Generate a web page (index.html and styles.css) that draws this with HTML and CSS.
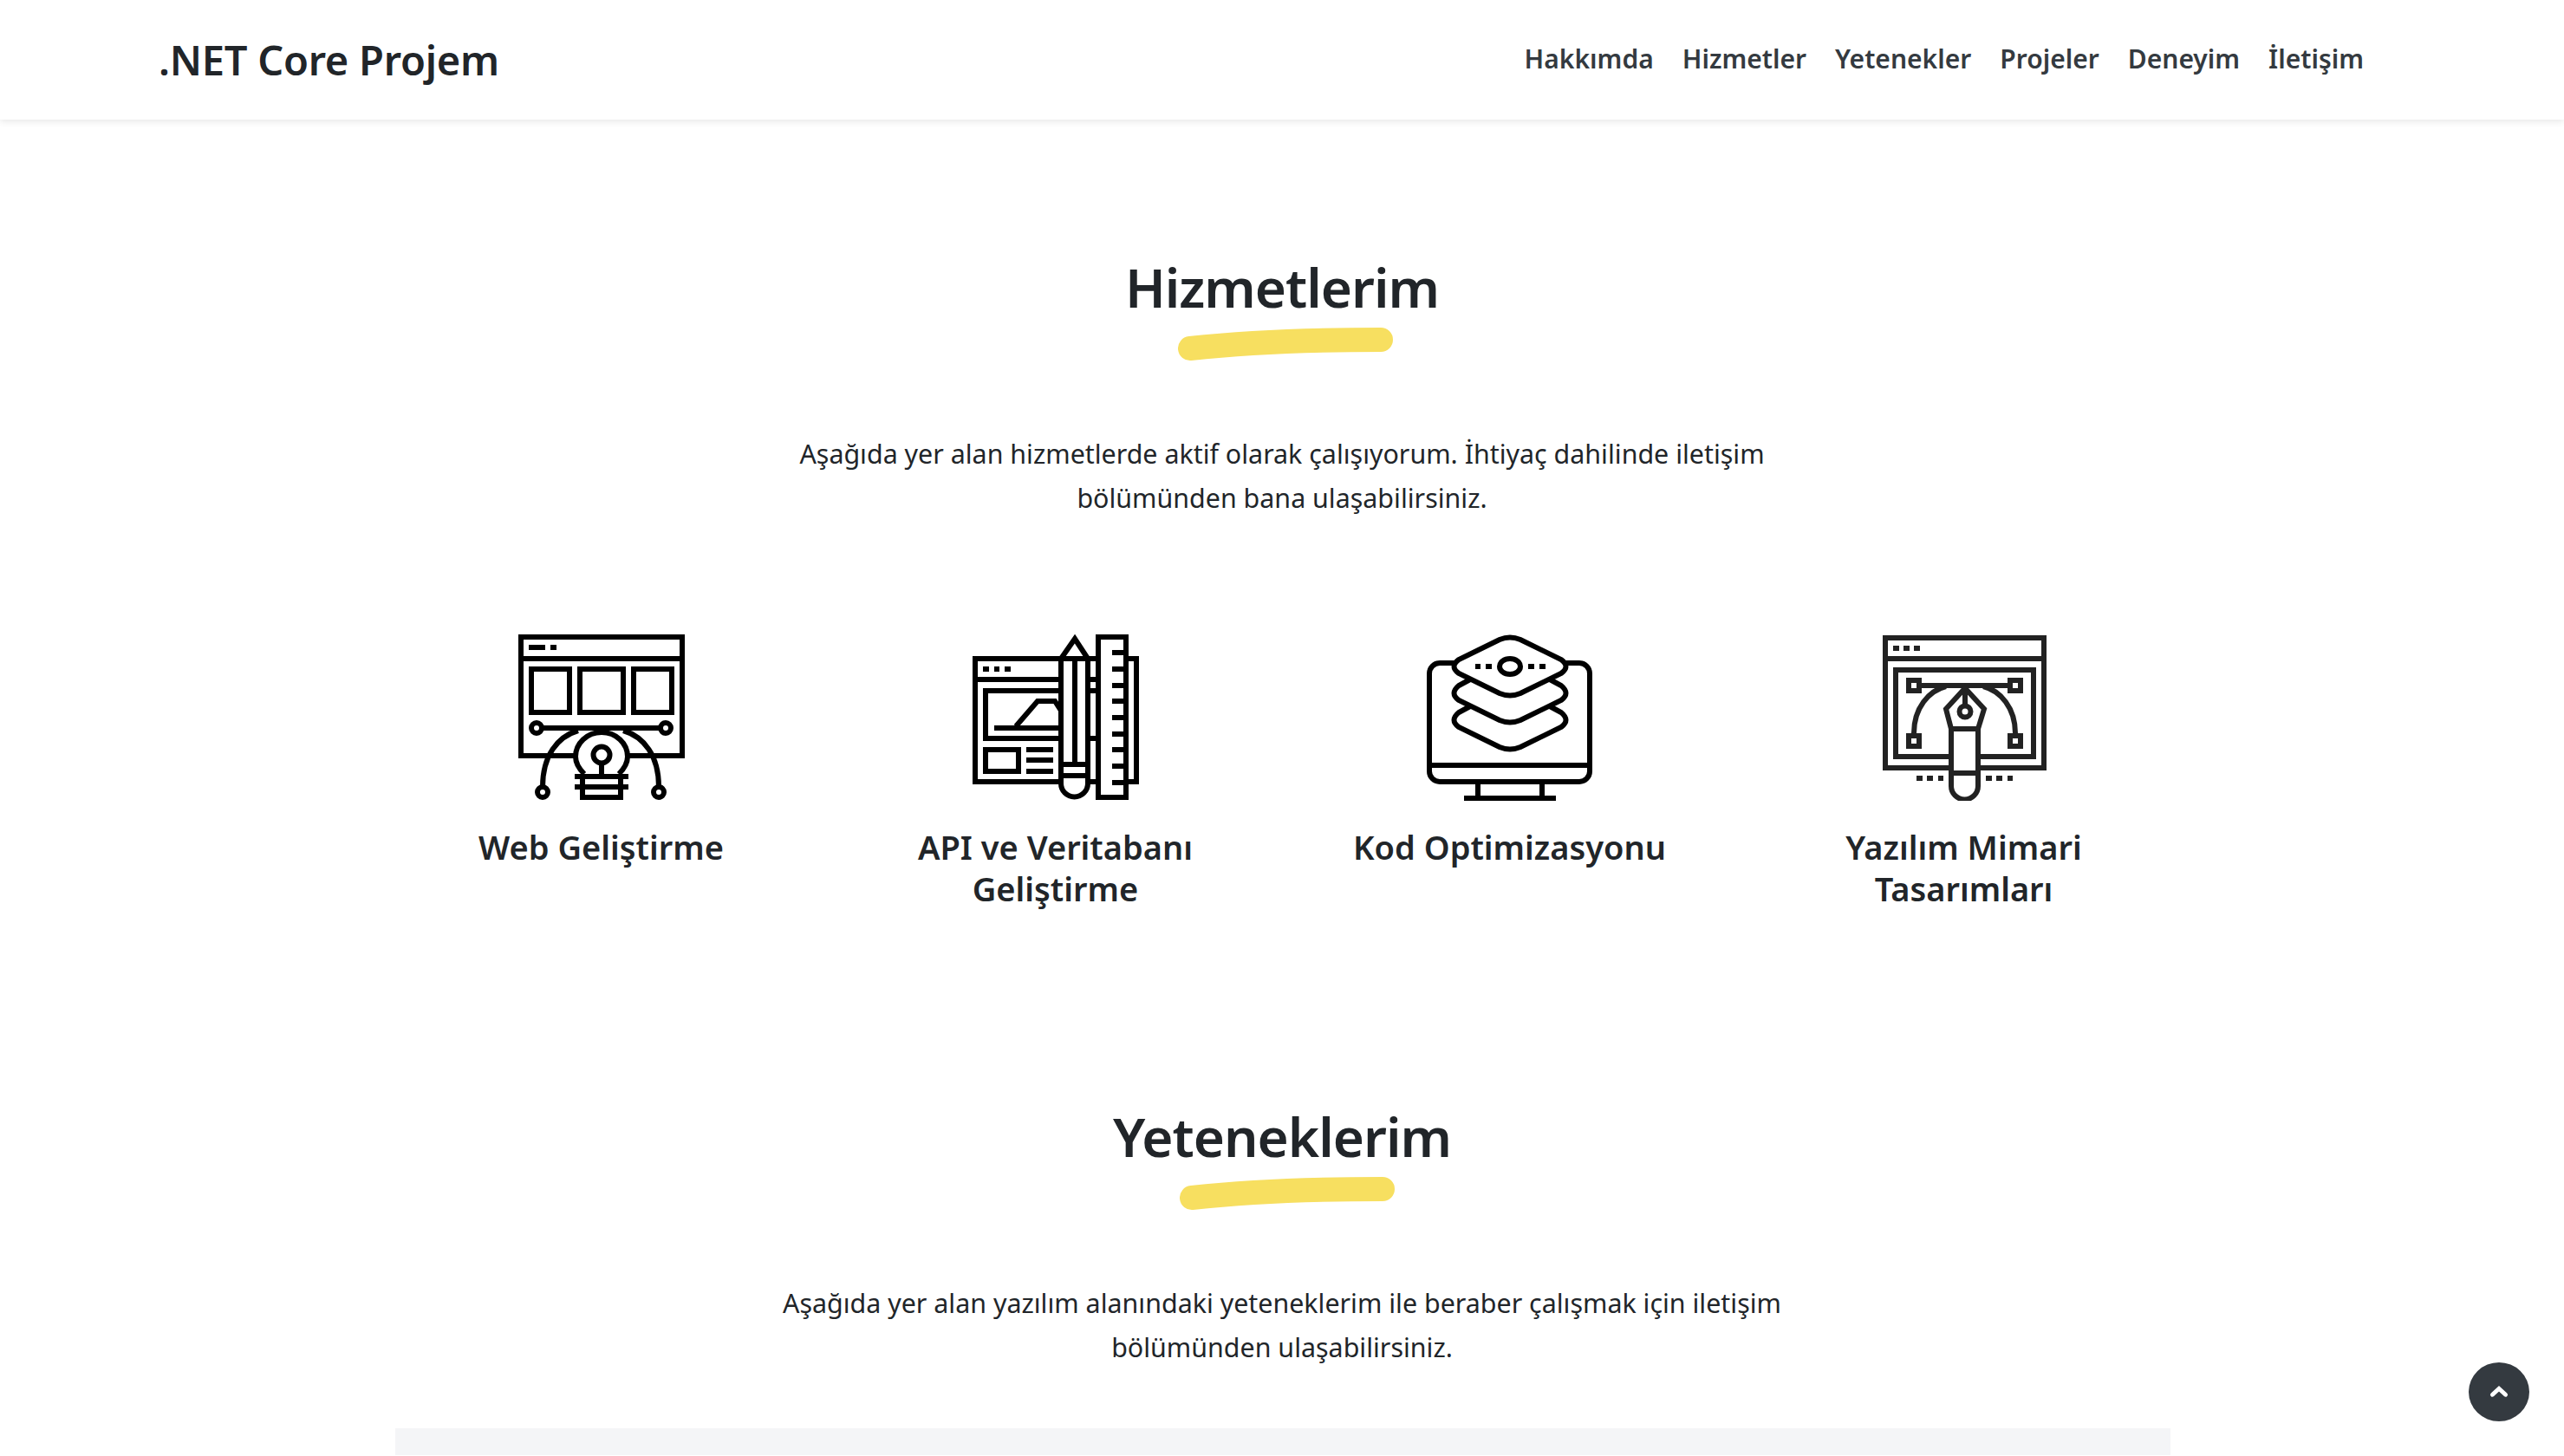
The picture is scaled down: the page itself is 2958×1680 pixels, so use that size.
FILE: index.html
```html
<!DOCTYPE html>
<html lang="tr">
<head>
    <meta charset="UTF-8">
    <meta name="viewport" content="width=device-width, initial-scale=1.0">
    <title>.NET Core Projem</title>
    <link rel="stylesheet" href="styles.css">
</head>
<body>

    <header class="navbar">
        <a class="brand" href="#">.NET Core Projem</a>
        <nav class="nav-links">
            <a href="#">Hakkımda</a>
            <a href="#">Hizmetler</a>
            <a href="#">Yetenekler</a>
            <a href="#">Projeler</a>
            <a href="#">Deneyim</a>
            <a href="#">İletişim</a>
        </nav>
    </header>

    <section class="section section-services">
        <div class="section-title">
            <h2>Hizmetlerim</h2>
            <svg class="brush" viewBox="0 0 248 40"><path d="M14 25C80 18 160 15 234 15"/></svg>
        </div>
        <p class="lead">Aşağıda yer alan hizmetlerde aktif olarak çalışıyorum. İhtiyaç dahilinde iletişim<br>bölümünden bana ulaşabilirsiniz.</p>

        <div class="services">
            <div class="service">
                <svg class="icon" viewBox="0 0 192 192">
                    <path d="M3 3H189V140H3Z M3 28H189"/>
                    <path d="M12 15H31 M37 15H44"/>
                    <path d="M15 40H59V90H15Z M71 40H121V90H71Z M133 40H177V90H133Z"/>
                    <circle cx="21" cy="108" r="6"/>
                    <circle cx="170" cy="108" r="6"/>
                    <path d="M27 108H164 M69 111C45 118 28 140 28 176 M121 111C145 118 162 140 162 176"/>
                    <circle cx="28" cy="182" r="6"/>
                    <circle cx="162" cy="182" r="6"/>
                    <path class="solid" d="M76 161C70 155 66 149 66 141A30 28 0 0 1 126 141C126 149 122 155 116 161"/>
                    <circle cx="96" cy="139" r="9.500"/>
                    <path d="M96 148V164 M65 164H127 M65 176H127 M74 164V188H118V164"/>
                </svg>
                <h3>Web Geliştirme</h3>
            </div>
            <div class="service">
                <svg class="icon" viewBox="0 0 192 192">
                    <path d="M3 28H189V170H3Z M3 52H145"/>
                    <path d="M12 40H19 M25 40H31 M37 40H44"/>
                    <path d="M145 65H15V120H145 M25 108H102 M50 106L75 77H95L102 88"/>
                    <path d="M15 133H53V158H15Z M62 133H93 M62 145H93 M62 158H93"/>
                    <path class="solid" d="M102 28L118 5L133 28V172A15.500 15.500 0 0 1 102 172Z"/>
                    <path d="M102 28H133 M118 30V150 M102 150H133 M102 163H133"/>
                    <path class="solid" d="M145 3H177V188H145Z"/>
                    <path d="M161 21H177 M161 40H177 M161 59H177 M161 77H177 M161 96H177 M161 115H177 M161 133H177 M161 152H177 M161 171H177"/>
                </svg>
                <h3>API ve Veritabanı Geliştirme</h3>
            </div>
            <div class="service">
                <svg class="icon" viewBox="0 0 192 192">
                    <path d="M15 33H176A12 12 0 0 1 188 45V158A12 12 0 0 1 176 170H15A12 12 0 0 1 3 158V45A12 12 0 0 1 15 33Z"/>
                    <path d="M3 151H188 M59 170V189 M133 170V189 M43 189H149"/>
                    <path d="M50 83L37 90Q26 99 37 107L84 130Q96 135 108 130L155 107Q166 99 155 90L142 83"/>
                    <path d="M50 52L37 59Q26 68 37 76L84 99Q96 104 108 99L155 76Q166 68 155 59L142 52"/>
                    <path class="solid" d="M84 6Q96 1 108 6L155 29Q166 37 155 45L108 68Q96 73 84 68L37 45Q26 37 37 29Z"/>
                    <ellipse cx="96" cy="37" rx="12" ry="9"/>
                    <path d="M56 37H62 M68 37H75 M117 37H124 M130 37H137"/>
                </svg>
                <h3>Kod Optimizasyonu</h3>
            </div>
            <div class="service">
                <svg class="icon icon-dark" viewBox="0 0 192 192">
                    <path d="M5 4H188V154H5Z M5 28H188"/>
                    <path d="M14 16H21 M26 16H33 M38 16H45"/>
                    <path d="M17 41H176V141H17Z"/>
                    <path d="M32 53H44V65H32Z M149 53H161V65H149Z M32 117H44V129H32Z M149 117H161V129H149Z"/>
                    <path d="M47 59H146 M38 114C38 85 55 65 75 60 M155 114C155 85 138 65 118 60"/>
                    <path class="solid" d="M81 109V175A15.500 15.500 0 0 0 112 175V109Z"/>
                    <path class="solid" d="M97 62L119 86L112 109H81L75 86Z"/>
                    <path d="M97 62V80 M81 160H112"/>
                    <circle cx="97" cy="89" r="6.500"/>
                    <path d="M41 166H48 M53 166H60 M66 166H72 M121 166H128 M133 166H140 M146 166H152"/>
                </svg>
                <h3>Yazılım Mimari Tasarımları</h3>
            </div>
        </div>
    </section>

    <section class="section section-skills">
        <div class="section-title">
            <h2>Yeteneklerim</h2>
            <svg class="brush" viewBox="0 0 248 40"><path d="M14 25C80 18 160 15 234 15"/></svg>
        </div>
        <p class="lead">Aşağıda yer alan yazılım alanındaki yeteneklerim ile beraber çalışmak için iletişim<br>bölümünden ulaşabilirsiniz.</p>
        <div class="skills-panel"></div>
    </section>

    <a class="to-top" href="#">
        <svg viewBox="0 0 24 24"><path d="M5 15L12 8.500L19 15"/></svg>
    </a>

</body>
</html>
```

FILE: styles.css
```css
html, body {
    height: 1680px;
    overflow: hidden;
}
body {
    margin: 0;
    background-color: #fff;
    color: #212529;
    font-family: "Noto Sans", "Open Sans", sans-serif;
}
h2, h3, p {
    margin: 0;
}
a {
    color: inherit;
    text-decoration: none;
}
.navbar {
    height: 138px;
    padding: 0 231px 0 183px;
    display: flex;
    align-items: center;
    justify-content: space-between;
    box-shadow: 0 2px 8px rgba(0,0,0,0.1);
}
.brand {
    font-size: 47px;
    font-weight: 600;
    letter-spacing: -0.25px;
}
.nav-links {
    display: flex;
    gap: 33px;
    margin-bottom: 4px;
    font-size: 30px;
    font-weight: 600;
    color: #343a40;
}
.section {
    display: flex;
    flex-direction: column;
    align-items: center;
}
.section-services {
    padding-top: 153px;
}
.section-skills {
    padding-top: 222px;
}
.section-title {
    display: flex;
    flex-direction: column;
    align-items: center;
}
.section-title h2 {
    font-size: 62px;
    font-weight: 600;
    line-height: 80px;
    letter-spacing: -1px;
}
.brush {
    width: 248px;
    height: 40px;
    margin-top: 6px;
    margin-left: 8px;
}
.section-skills .brush {
    margin-left: 12px;
}
.brush path {
    fill: none;
    stroke: #f7df60;
    stroke-width: 28px;
    stroke-linecap: round;
}
.lead {
    margin-top: 81px;
    font-size: 30.400px;
    line-height: 51px;
    text-align: center;
}
.services {
    margin-top: 132px;
    margin-left: 1px;
    width: 2096px;
    display: grid;
    grid-template-columns: repeat(4, 1fr);
}
.service {
    display: flex;
    flex-direction: column;
    align-items: center;
    padding: 0 60px;
    text-align: center;
}
.icon {
    width: 192px;
    height: 192px;
}
.icon path, .icon circle, .icon ellipse {
    fill: none;
    stroke: #000;
    stroke-width: 6px;
}
.icon .solid {
    fill: #fff;
}
.icon-dark path, .icon-dark circle {
    stroke: #222;
}
.service h3 {
    margin-top: 29px;
    font-size: 38px;
    font-weight: 600;
    line-height: 48px;
}
.skills-panel {
    margin-top: 68px;
    margin-left: 1px;
    width: 2048px;
    height: 31px;
    background-color: #f4f5f7;
}
.to-top {
    position: fixed;
    right: 40px;
    bottom: 40px;
    width: 70px;
    height: 68px;
    border-radius: 50%;
    background-color: #343a40;
    display: flex;
    align-items: center;
    justify-content: center;
}
.to-top svg {
    width: 26px;
    height: 26px;
}
.to-top path {
    fill: none;
    stroke: #fff;
    stroke-width: 4.500px;
    stroke-linecap: round;
}
```
